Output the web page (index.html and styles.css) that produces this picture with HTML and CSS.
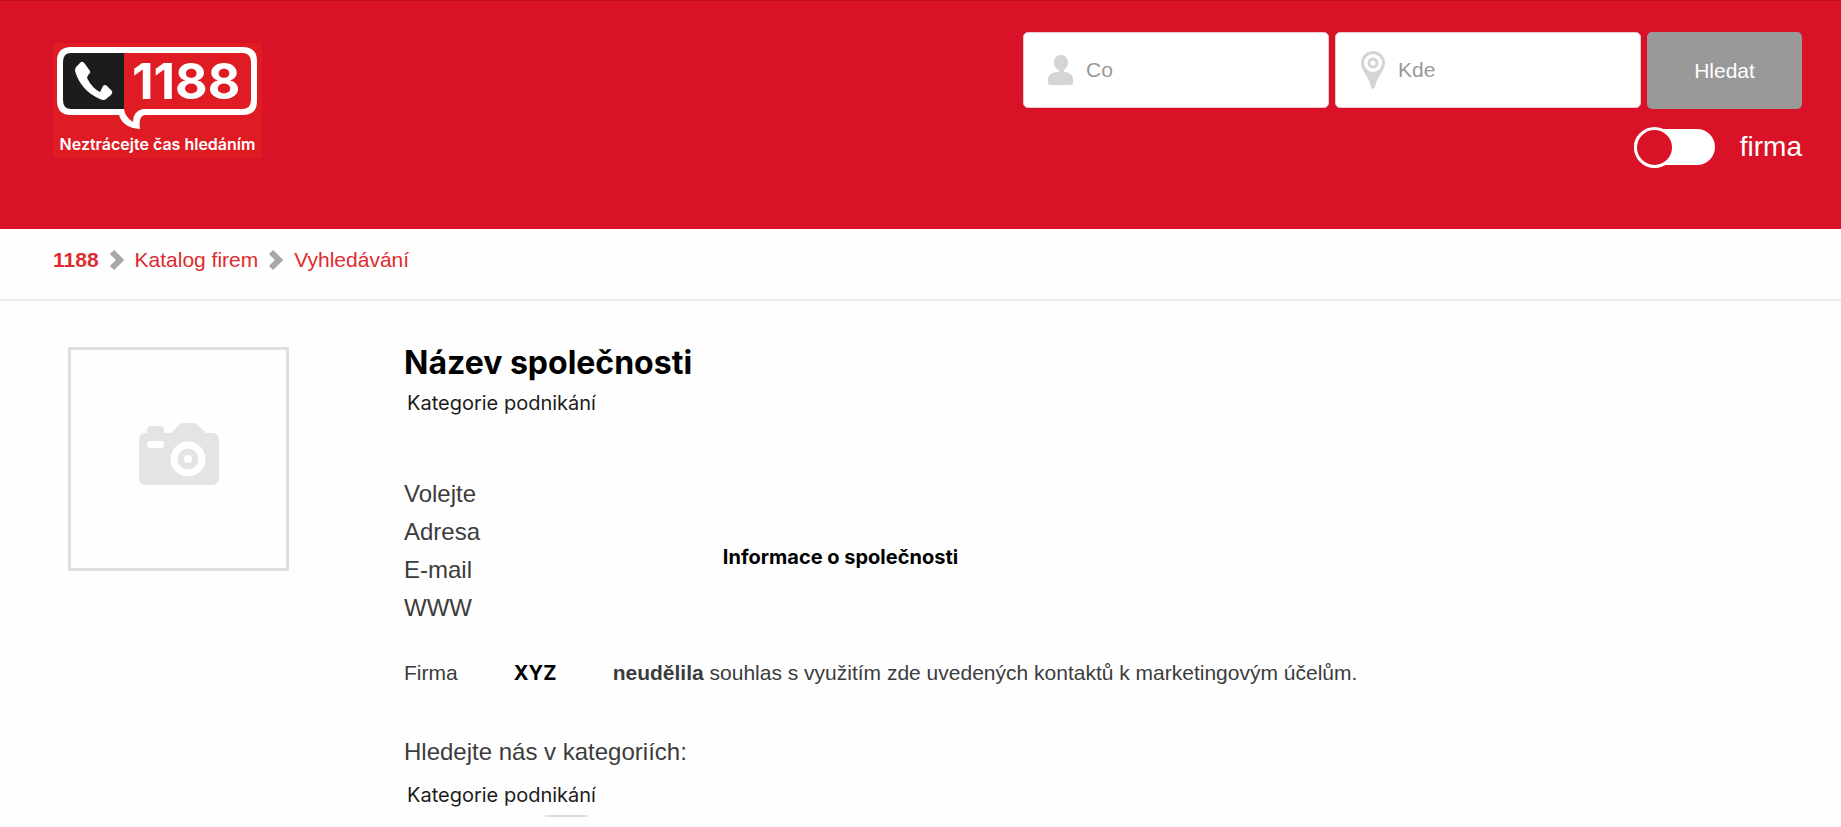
FILE: index.html
```html
<!DOCTYPE html>
<html lang="cs">
<head>
    <meta charset="UTF-8">
    <meta name="viewport" content="width=device-width, initial-scale=1.0">
    <title>1188 - Název společnosti</title>
    <link rel="stylesheet" href="styles.css">
</head>
<body>
    <header class="header">
        <a class="logo" href="#" aria-label="1188">
            <svg class="logo-mark" width="209" height="90" viewBox="0 0 209 90">
                <path d="M18 4H190Q204 4 204 18V58Q204 72 190 72H92Q85 73 87 86Q70 85 66 72H18Q4 72 4 58V18Q4 4 18 4Z" fill="#fff"/>
                <path d="M18 10H71V66H18Q10 66 10 57V19Q10 10 18 10Z" fill="#1c1c1b"/>
                <path d="M71 10H189Q198 10 198 19V57Q198 66 189 66H90Q80 68 80 79Q72 74 71 66Z" fill="#df1c24"/>
                <path d="M23 24L28 19Q30 18 32 21L37 28Q38 30 35 32L34 35Q39 45 47 49L50 43Q52 41 54 43L59 48Q60 50 58 52L53 56Q51 58 47 56Q28 48 22 28Q22 26 23 24Z" fill="#fff"/>
                <text class="logo-number" x="79" y="56">1188</text>
            </svg>
            <span class="logo-claim">Neztrácejte čas hledáním</span>
        </a>
        <form class="search">
            <div class="search-row">
                <label class="field">
                    <svg class="icon" width="26" height="40" viewBox="0 0 26 40">
                        <path d="M13 5C17 5 20 8 20 12C20 16 18 19 16 20V22C21 22 25 25 25 29V33Q25 35 23 35H2Q0 35 0 33V29C0 25 4 22 11 22V20C8 19 6 16 6 12C6 8 9 5 13 5Z" fill="#d4d4d4"/>
                    </svg>
                    <input type="text" placeholder="Co" aria-label="Co">
                </label>
                <label class="field">
                    <svg class="icon" width="26" height="40" viewBox="0 0 26 40">
                        <path d="M13 1A12 12 0 0 1 25 13C25 21 17 26 15 37Q13 41 11 37C9 26 1 21 1 13A12 12 0 0 1 13 1Z" fill="#d4d4d4"/>
                        <circle cx="13" cy="13" r="9" fill="#fff"/>
                        <circle cx="13" cy="13" r="4" fill="none" stroke="#d4d4d4" stroke-width="3"/>
                    </svg>
                    <input type="text" placeholder="Kde" aria-label="Kde">
                </label>
                <button class="search-button" type="button">Hledat</button>
            </div>
            <label class="toggle">
                <input type="checkbox">
                <span>firma</span>
            </label>
        </form>
    </header>

    <nav class="breadcrumb">
        <a class="home" href="#">1188</a>
        <svg width="16" height="22" viewBox="0 0 16 22"><path d="M3 3L11 11L3 19" fill="none" stroke="#a8a8a8" stroke-width="6"/></svg>
        <a href="#">Katalog firem</a>
        <svg width="16" height="22" viewBox="0 0 16 22"><path d="M3 3L11 11L3 19" fill="none" stroke="#a8a8a8" stroke-width="6"/></svg>
        <a href="#">Vyhledávání</a>
    </nav>

    <main class="detail">
        <div class="photo">
            <svg width="80" height="62" viewBox="0 0 80 62">
                <path d="M7 10H8V7Q8 3 12 3H21Q25 3 25 7V10H32L40 2Q42 0 45 0H54Q57 0 59 2L67 10H73Q80 10 80 17V55Q80 62 73 62H7Q0 62 0 55V17Q0 10 7 10Z" fill="#e4e4e4"/>
                <rect x="8" y="18" width="17" height="7" rx="3" fill="#fff"/>
                <circle cx="49" cy="36" r="14" fill="#e4e4e4" stroke="#fff" stroke-width="7"/>
                <circle cx="49" cy="36" r="4" fill="#fff"/>
            </svg>
        </div>
        <div class="company">
            <h1>Název společnosti</h1>
            <p class="category">Kategorie podnikání</p>
            <div class="contact">
                <ul class="contact-labels">
                    <li>Volejte</li>
                    <li>Adresa</li>
                    <li>E-mail</li>
                    <li>WWW</li>
                </ul>
                <p class="contact-info">Informace o společnosti</p>
            </div>
            <p class="consent">Firma <b class="name">XYZ</b> <span><b>neudělila</b> souhlas s využitím zde uvedených kontaktů k marketingovým účelům.</span></p>
            <h2>Hledejte nás v kategoriích:</h2>
            <p class="category">Kategorie podnikání</p>
            <div class="underline"></div>
        </div>
    </main>
</body>
</html>
```
FILE: styles.css
```css
*, *::before {
    box-sizing: border-box;
}

body {
    margin: 0;
    font-family: "Liberation Sans", Arial, sans-serif;
    font-size: 21px;
    color: #3c3c3c;
    background-color: #fefefe;
}

h1, h2, p, ul {
    margin: 0;
    padding: 0;
}

.header {
    display: flex;
    justify-content: space-between;
    align-items: flex-start;
    padding: 31px 39px 60px 53px;
    background-color: #d91228;
    border-top: 1px solid #c00d20;
}

.logo {
    display: flex;
    flex-direction: column;
    align-items: center;
    width: 209px;
    margin-top: 11px;
    padding-bottom: 3px;
    background-color: #df1c24;
    color: #fff;
    text-decoration: none;
}

.logo-number {
    font-family: Inter, sans-serif;
    font-size: 50px;
    font-weight: 700;
    fill: #fff;
}

.logo-claim {
    font-family: Inter, sans-serif;
    font-size: 16px;
    font-weight: 600;
    line-height: 22px;
    white-space: nowrap;
}

.search {
    display: flex;
    flex-direction: column;
    align-items: flex-end;
    gap: 16px;
}

.search-row {
    display: flex;
    gap: 6px;
}

.field {
    display: flex;
    align-items: center;
    gap: 12px;
    width: 306px;
    height: 76px;
    padding: 0 24px;
    background-color: #fff;
    border: 1px solid #e8c8cc;
    border-radius: 5px;
}

.icon {
    flex-shrink: 0;
}

.field input {
    width: 100%;
    min-width: 0;
    padding: 0;
    border: none;
    outline: none;
    background: none;
    font-family: inherit;
    font-size: 21px;
    color: #3c3c3c;
}

.field input::placeholder {
    color: #999;
    opacity: 1;
}

.search-button {
    width: 155px;
    height: 77px;
    border: none;
    border-radius: 5px;
    background-color: #999;
    color: #fff;
    font-family: inherit;
    font-size: 21px;
    cursor: pointer;
}

.toggle {
    display: flex;
    align-items: center;
    gap: 25px;
    height: 44px;
    font-size: 28px;
    color: #fff;
}

.toggle input {
    display: flex;
    align-items: center;
    appearance: none;
    width: 81px;
    height: 36px;
    margin: 0;
    border-radius: 18px;
    background-color: #fff;
}

.toggle input::before {
    content: "";
    flex-shrink: 0;
    width: 41px;
    height: 41px;
    border: 3px solid #fff;
    border-radius: 50%;
    background-color: #d91228;
}

.toggle input:checked::before {
    margin-left: auto;
}

.breadcrumb {
    display: flex;
    align-items: center;
    gap: 10px;
    height: 72px;
    padding: 0 53px 8px;
    border-bottom: 2px solid #eee;
}

.breadcrumb a {
    color: #e02b2f;
    text-decoration: none;
}

.breadcrumb .home {
    font-weight: bold;
}

.detail {
    display: grid;
    grid-template-columns: 221px 1fr;
    gap: 115px;
    align-items: start;
    padding: 46px 68px 0;
}

.photo {
    display: flex;
    align-items: center;
    justify-content: center;
    height: 224px;
    padding-bottom: 10px;
    border: 3px solid #dfdfdf;
}

h1 {
    font-family: Inter, sans-serif;
    font-size: 32px;
    line-height: 32px;
    color: #000;
}

.category {
    padding: 10px 3px 6px;
    font-family: Inter, sans-serif;
    font-size: 20px;
    line-height: 28px;
    color: #1c1c1c;
}

.contact {
    display: flex;
    align-items: center;
    gap: 90px;
    margin-top: 52px;
}

.contact-labels {
    width: 99px;
    list-style: none;
    font-size: 24px;
    line-height: 38px;
}

.contact-info {
    flex: 0 1 495px;
    padding-top: 12px;
    text-align: center;
    font-family: Inter, sans-serif;
    font-size: 20px;
    font-weight: 700;
    line-height: 24px;
    color: #000;
}

.consent {
    display: flex;
    align-items: baseline;
    margin-top: 32px;
    line-height: 28px;
}

.consent .name {
    width: 155px;
    text-align: center;
    font-family: Inter, sans-serif;
    font-size: 20px;
    color: #000;
}

h2 {
    margin: 50px 0 4px;
    font-size: 24px;
    font-weight: normal;
    line-height: 30px;
}

.underline {
    width: 42px;
    height: 2px;
    margin-left: 141px;
    background-color: #ddd;
}
```
